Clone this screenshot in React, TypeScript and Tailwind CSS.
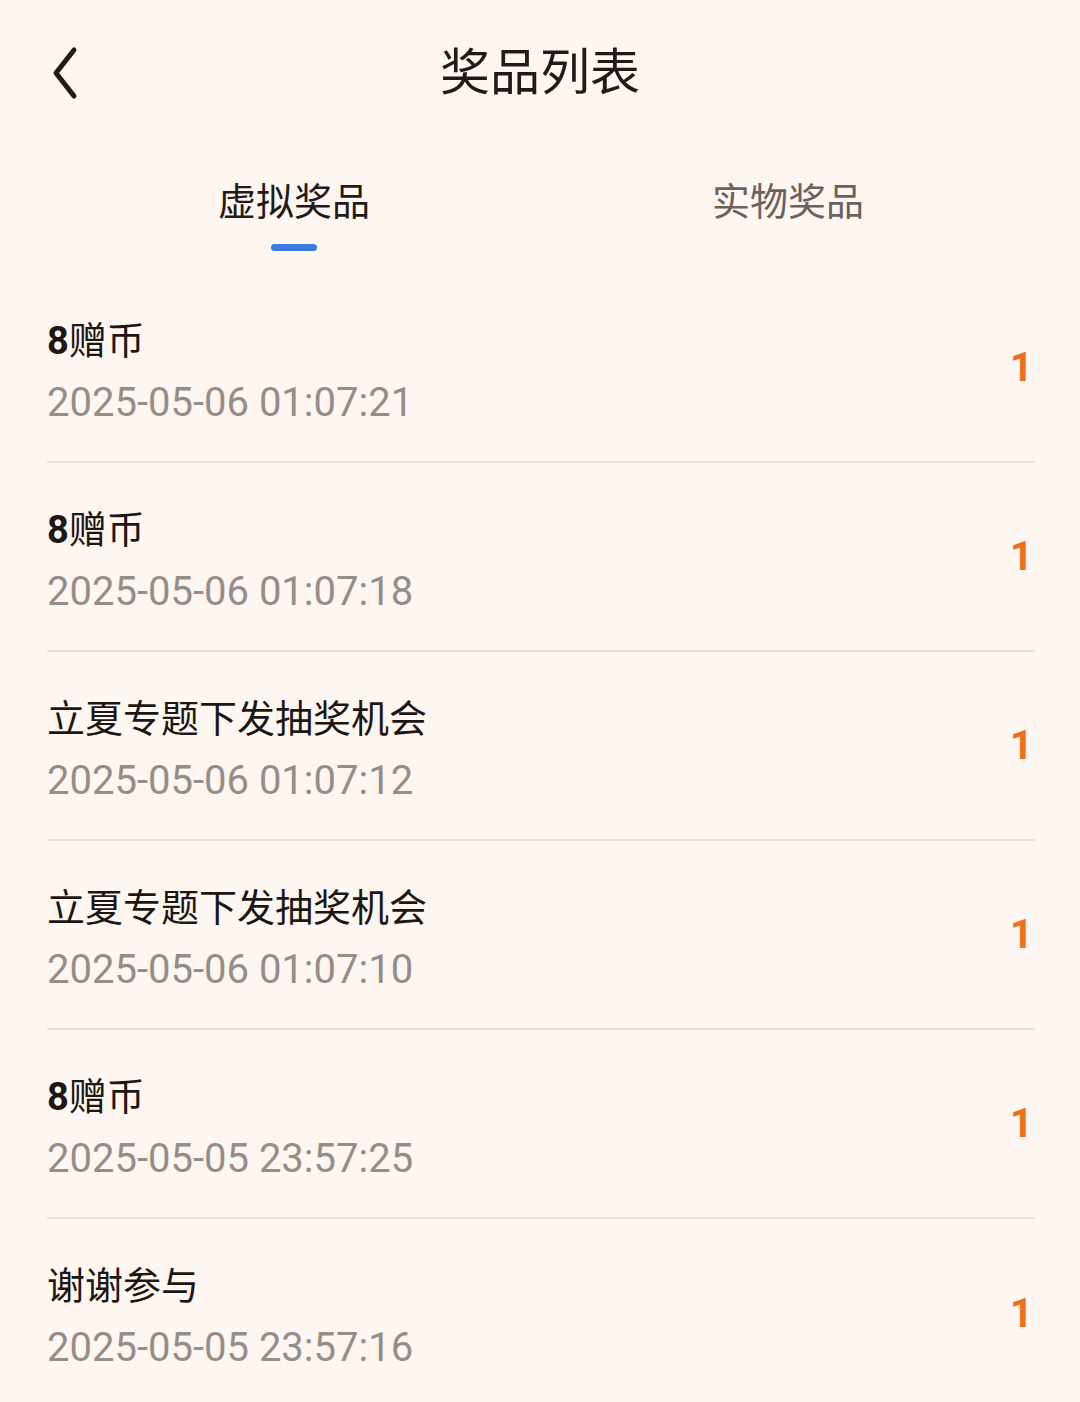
import React from "react"

const prizes = [
  { title: "8赠币", time: "2025-05-06 01:07:21", count: 1 },
  { title: "8赠币", time: "2025-05-06 01:07:18", count: 1 },
  { title: "立夏专题下发抽奖机会", time: "2025-05-06 01:07:12", count: 1 },
  { title: "立夏专题下发抽奖机会", time: "2025-05-06 01:07:10", count: 1 },
  { title: "8赠币", time: "2025-05-05 23:57:25", count: 1 },
  { title: "谢谢参与", time: "2025-05-05 23:57:16", count: 1 },
]

const font = "font-['Roboto','Noto_Sans_CJK_SC',sans-serif]"

function PrizeTitle({ text }: { text: string }) {
  // leading digits are drawn heavier than the CJK part
  const m = text.match(/^(\d+)(.*)$/)
  if (!m) return <>{text}</>
  return (
    <>
      <span className="font-bold">{m[1]}</span>
      {m[2]}
    </>
  )
}

export default function App() {
  return (
    <div className={`min-h-[1402px] w-[1080px] bg-[#fef6f1] ${font}`}>
      <header className="relative flex h-[144px] items-center justify-center">
        <button className="absolute left-[44px] top-[40px] p-1">
          <svg width="34" height="58" viewBox="0 0 34 58" fill="none">
            <path d="M26 6 L8 29 L26 52" stroke="#221a16" strokeWidth="5" strokeLinecap="round" strokeLinejoin="round" />
          </svg>
        </button>
        <h1 className="pt-[2px] text-[50px] leading-[62px] text-[#221a16]">奖品列表</h1>
      </header>

      <nav className="ml-[47px] mr-[45px] grid grid-cols-2">
        <div className="flex flex-col items-center pt-[33px]">
          <span className="text-[38px] leading-[50px] text-[#221a16]">虚拟奖品</span>
          <span className="mt-[17px] h-[7px] w-[46px] rounded-full bg-[#3b7be0]" />
        </div>
        <div className="flex flex-col items-center pt-[33px]">
          <span className="text-[38px] leading-[50px] text-[#6b615d]">实物奖品</span>
        </div>
      </nav>

      <ul className="ml-[47px] mr-[45px] mt-[23px]">
        {prizes.map((p, i) => (
          <li
            key={i}
            className={`flex h-[189px] items-center justify-between ${i < prizes.length - 1 ? "border-b-2 border-[#e7e0dc]" : ""}`}
          >
            <div className="flex flex-col self-start pt-[42px]">
              <span className="text-[38px] leading-[50px] text-[#1d1613]">
                <PrizeTitle text={p.title} />
              </span>
              <span className="mt-[12px] text-[40px] leading-[50px] text-[#968d89]">{p.time}</span>
            </div>
            <span className="pr-[2px] text-[40px] font-bold text-[#ef6f1c]">{p.count}</span>
          </li>
        ))}
      </ul>
    </div>
  )
}
